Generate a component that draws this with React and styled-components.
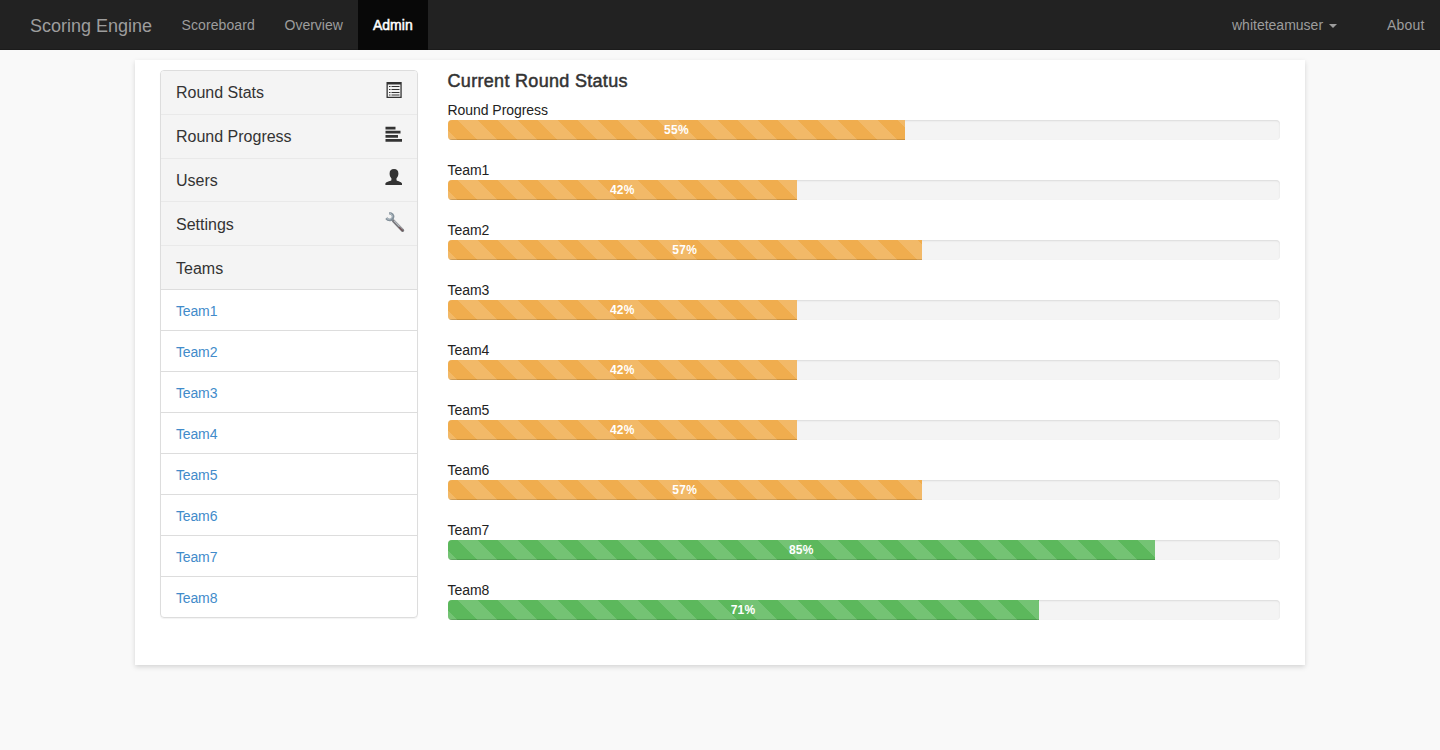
import React from 'react';
import styled, { createGlobalStyle } from 'styled-components';

const GlobalStyle = createGlobalStyle`
  *, *::before, *::after { box-sizing: border-box; }
  body {
    margin: 0;
    background: #f9f9f9;
    color: #333;
    font-family: "Liberation Sans", Arial, sans-serif;
    font-size: 14px;
    line-height: 20px;
  }
`;

const Page = styled.div`
  min-height: 750px;
`;

const Navbar = styled.nav`
  display: flex;
  height: 50px;
  padding: 0 0 0 15px;
  background: #222;
  box-shadow: inset 0 -1px 0 #1b1b1b;
  color: #9d9d9d;
`;

const Brand = styled.a`
  padding: 16px 0 14px 15px;
  width: 151.5px;
  font-size: 18px;
  white-space: nowrap;
`;

const NavItem = styled.a`
  width: ${(p) => p.$width}px;
  height: 50px;
  padding: 15px 0 15px 15px;
  white-space: nowrap;
  letter-spacing: ${(p) => p.$track || 0}px;
  color: ${(p) => (p.$active ? '#fff' : 'inherit')};
  background: ${(p) => (p.$active ? '#080808' : 'transparent')};
  -webkit-text-stroke: ${(p) => (p.$active ? '0.5px #fff' : '0')};
`;

const NavRight = styled.div`
  display: flex;
  margin-left: auto;
`;

const Caret = styled.span`
  display: inline-block;
  margin-left: 6px;
  vertical-align: middle;
  border-top: 4px solid;
  border-left: 4px solid transparent;
  border-right: 4px solid transparent;
`;

const Card = styled.main`
  display: flex;
  gap: 30px;
  width: 1170px;
  height: 605px;
  margin: 10px auto 0;
  padding: 10px 25px;
  background: #fff;
  box-shadow: 0 2px 5px rgba(0, 0, 0, 0.15);
`;

const Panel = styled.aside`
  width: 257.5px;
  align-self: flex-start;
  border: 1px solid #ddd;
  border-radius: 4px;
  overflow: hidden;
  box-shadow: 0 1px 1px rgba(0, 0, 0, 0.05);
`;

const PanelHeading = styled.div`
  display: flex;
  justify-content: space-between;
  height: 43.75px;
  padding: 11.6px 11px 0 15px;
  font-size: 16px;
  line-height: 22px;
  background: #f4f4f4;
  border-bottom: 1px solid ${(p) => (p.$last ? '#ddd' : '#e9e9e9')};
  &:first-child { padding-top: 11px; }
`;

const Icon = styled.svg`
  display: block;
  width: 22px;
  height: 22px;
  margin-top: -3px;
`;

const TeamLink = styled.a`
  display: block;
  height: 41px;
  padding: 11px 15px 9px;
  color: #428bca;
  letter-spacing: -0.15px;
  border-bottom: 1px solid #ddd;
  &:last-child { height: 40px; border-bottom: 0; }
`;

const Content = styled.section`
  flex: 1;
`;

const Title = styled.h4`
  margin: 0;
  padding: 1px 0 9px;
  font-size: 18px;
  line-height: 20px;
  font-weight: 400;
  letter-spacing: 0.31px;
  -webkit-text-stroke: 0.5px #333;
`;

const ProgressRow = styled.div`
  height: 60px;
`;

const ProgressLabel = styled.div`
  height: 20px;
  color: #222;
  letter-spacing: -0.05px;
`;

const Track = styled.div`
  height: 20px;
  overflow: hidden;
  border-radius: 4px;
  background: #f4f4f4;
  box-shadow: inset 0 1px 2px rgba(0, 0, 0, 0.1);
`;

const Bar = styled.div`
  height: 100%;
  color: #fff;
  font-size: 12px;
  font-weight: 700;
  text-align: center;
  letter-spacing: 0.25px;
  background-color: ${(p) => (p.$done ? '#5cb85c' : '#f0ad4e')};
  background-image: linear-gradient(
    45deg,
    rgba(255, 255, 255, 0.15) 25%, transparent 25%,
    transparent 50%, rgba(255, 255, 255, 0.15) 50%,
    rgba(255, 255, 255, 0.15) 75%, transparent 75%, transparent
  );
  background-size: 40px 40px;
  background-position: 10px 0;
  box-shadow: inset 0 -1px 0 rgba(0, 0, 0, 0.15);
`;

const StatsIcon = () => (
  <Icon viewBox="0 0 22 22">
    <path fill="#333" fillRule="evenodd" d="M2.500 3h15.200v16H2.500zM3.800 5.500v12.200h12.600v-12.200z" />
    <path fill="#333" d="M5 7h1.500v1H5zM7.500 7h8v1H7.500zM5 10h1.500v1H5zM7.500 10h8v1H7.500zM5 13h1.500v1H5zM7.500 13h8v1H7.500zM5 15.500h1.500v1H5zM7.500 15.500h8v1H7.500z" />
  </Icon>
);

const ProgressIcon = () => (
  <Icon viewBox="0 0 22 22">
    <path fill="#333" d="M1.500 3.700h10v2.800h-10zM1.500 7.800h15v2.800h-15zM1.500 11.900h12.500v2.800h-12.500zM1.500 16h16.500v2.800h-16.500z" />
  </Icon>
);

const UserIcon = () => (
  <Icon viewBox="0 0 22 22">
    <path fill="#333" d="M10 2c3 0 4.400 1.800 4.400 4.400 0 2-.7 3.600-1.900 4.900v1.900c1.500 1.100 5.200 1.600 5.500 3.400V18H1.400v-1.400c.3-1.800 4.500-2.300 6-3.400v-1.900C6.200 10 5.600 8.400 5.600 6.400 5.600 3.800 7 2 10 2z" />
  </Icon>
);

const WrenchIcon = () => (
  <Icon viewBox="0 0 22 22">
    <path d="M9.500 10 L18.600 19.300" stroke="#77777b" strokeWidth="3.200" strokeLinecap="round" />
    <path d="M10 9.700 L18.500 18.300" stroke="#bcc2c8" strokeWidth="1.100" />
    <path d="M15 16 L18.700 19.700" stroke="#71575a" strokeWidth="1.600" />
    <path fill="none" stroke="#84919b" strokeWidth="2.600" d="M5.200 2.200c2.800.1 4.500 2.100 3.700 4.400C8.200 9.300 4.400 9.900 2.300 7.100" />
    <path fill="none" stroke="#bdc8d0" strokeWidth=".9" d="M6 2.500c2.400 1 2.900 2.800 1.800 4.300C6.700 8.500 4.200 8.500 2.900 7.500" />
  </Icon>
);

const HEADINGS = [
  { text: 'Round Stats', icon: StatsIcon },
  { text: 'Round Progress', icon: ProgressIcon },
  { text: 'Users', icon: UserIcon },
  { text: 'Settings', icon: WrenchIcon },
  { text: 'Teams' },
];

const TEAMS = ['Team1', 'Team2', 'Team3', 'Team4', 'Team5', 'Team6', 'Team7', 'Team8'];

const PROGRESS = [
  ['Round Progress', 55],
  ['Team1', 42],
  ['Team2', 57],
  ['Team3', 42],
  ['Team4', 42],
  ['Team5', 42],
  ['Team6', 57],
  ['Team7', 85],
  ['Team8', 71],
];

export default function App() {
  return (
    <Page>
      <GlobalStyle />
      <Navbar>
        <Brand>Scoring Engine</Brand>
        <NavItem $width={103} $track={0.1}>Scoreboard</NavItem>
        <NavItem $width={88.5}>Overview</NavItem>
        <NavItem $width={70} $active>Admin</NavItem>
        <NavRight>
          <NavItem $width={155}>whiteteamuser<Caret /></NavItem>
          <NavItem $width={68} $track={0.2}>About</NavItem>
        </NavRight>
      </Navbar>
      <Card>
        <Panel>
          {HEADINGS.map(({ text, icon: Glyph }, i) => (
            <PanelHeading key={text} $last={i === HEADINGS.length - 1}>
              <span>{text}</span>
              {Glyph && <Glyph />}
            </PanelHeading>
          ))}
          <div>
            {TEAMS.map((team) => <TeamLink key={team}>{team}</TeamLink>)}
          </div>
        </Panel>
        <Content>
          <Title>Current Round Status</Title>
          {PROGRESS.map(([label, value]) => (
            <ProgressRow key={label}>
              <ProgressLabel>{label}</ProgressLabel>
              <Track>
                <Bar $done={value > 60} style={{ width: `${value}%` }}>{value}%</Bar>
              </Track>
            </ProgressRow>
          ))}
        </Content>
      </Card>
    </Page>
  );
}
